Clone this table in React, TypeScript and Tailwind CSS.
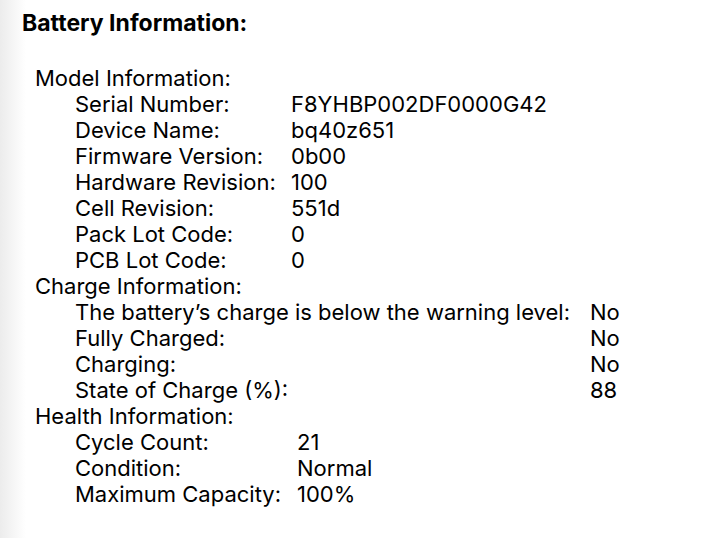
import React from "react";

const model: [string, string][] = [
  ["Serial Number:", "F8YHBP002DF0000G42"],
  ["Device Name:", "bq40z651"],
  ["Firmware Version:", "0b00"],
  ["Hardware Revision:", "100"],
  ["Cell Revision:", "551d"],
  ["Pack Lot Code:", "0"],
  ["PCB Lot Code:", "0"],
];

const charge: [string, string][] = [
  ["The battery\u2019s charge is below the warning level:", "No"],
  ["Fully Charged:", "No"],
  ["Charging:", "No"],
  ["State of Charge (%):", "88"],
];

const health: [string, string][] = [
  ["Cycle Count:", "21"],
  ["Condition:", "Normal"],
  ["Maximum Capacity:", "100%"],
];

function Section({
  title,
  rows,
  cols,
}: {
  title: string;
  rows: [string, string][];
  cols: string;
}) {
  return (
    <div className="flex flex-col">
      <div className="pl-[35px] h-[26px] leading-[26px]">{title}</div>
      <div className={`grid pl-[75px] ${cols}`}>
        {rows.map(([k, v]) => (
          <React.Fragment key={k}>
            <div className="h-[26px] leading-[26px] whitespace-nowrap">{k}</div>
            <div className="h-[26px] leading-[26px] whitespace-nowrap">{v}</div>
          </React.Fragment>
        ))}
      </div>
    </div>
  );
}

export default function App() {
  return (
    <div
      className="w-[710px] h-[538px] overflow-hidden bg-[linear-gradient(to_right,#ececec,#ffffff_26px)] text-black text-[22px] pt-[10px]"
      style={{ fontFamily: "Inter, 'Liberation Sans', sans-serif" }}
    >
      <div className="pl-[22px] h-[26px] leading-[26px] font-bold text-[23px]">
        Battery Information:
      </div>
      <div className="h-[29px]" />
      <Section title="Model Information:" rows={model} cols="grid-cols-[216px_auto]" />
      <Section title="Charge Information:" rows={charge} cols="grid-cols-[515px_auto]" />
      <Section title="Health Information:" rows={health} cols="grid-cols-[222px_auto]" />
    </div>
  );
}
